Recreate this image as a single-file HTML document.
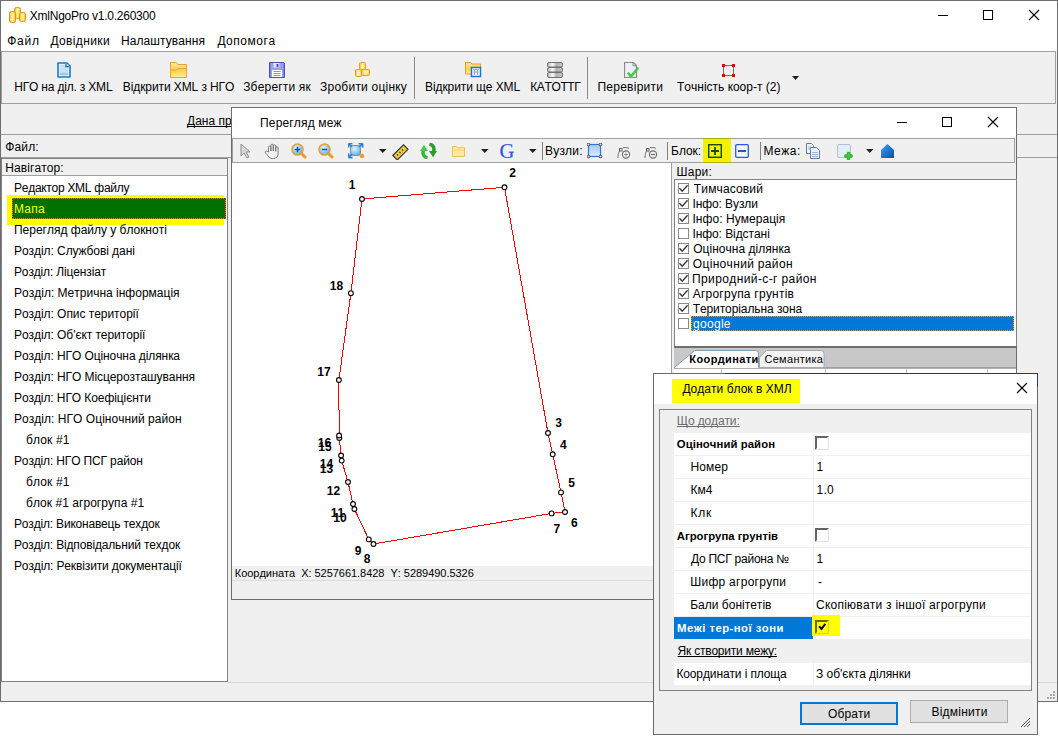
<!DOCTYPE html>
<html><head><meta charset="utf-8">
<style>
*{margin:0;padding:0;box-sizing:border-box}
html,body{width:1058px;height:753px;overflow:hidden;background:#fff;font-family:"Liberation Sans",sans-serif;font-size:12px;color:#000;font-kerning:none}
.a{position:absolute}
.t{position:absolute;white-space:pre;line-height:14px;text-decoration-skip-ink:none}
.s{position:absolute;white-space:pre;line-height:13px;font-size:11px}
.hl{position:absolute;height:1px}
.vl{position:absolute;width:1px}
</style></head><body>
<!-- MAIN WINDOW -->
<div class="a" style="left:0;top:0;width:1058px;height:702px;border:1px solid #6e6e6e;background:#f0f0f0"></div>
<div class="a" style="left:1px;top:1px;width:1056px;height:50px;background:#fff"></div>
<div class="t" style="left:29.8px;top:9px;letter-spacing:-0.245px">XmlNgoPro v1.0.260300</div>
<div class="t" style="left:7.2px;top:34px;letter-spacing:0.800px">Файл</div>
<div class="t" style="left:50.4px;top:34px;letter-spacing:0.389px">Довідники</div>
<div class="t" style="left:120.9px;top:34px;letter-spacing:0.108px">Налаштування</div>
<div class="t" style="left:217.4px;top:34px;letter-spacing:0.543px">Допомога</div>

<!-- toolbar -->
<div class="a" style="left:1px;top:51px;width:1055px;height:53px;border:1px solid #a0a0a0;background:#f0f0f0"></div>
<div class="t" style="left:14.2px;top:80px;letter-spacing:-0.181px">НГО на діл. з XML</div>
<div class="t" style="left:122.8px;top:80px;letter-spacing:-0.095px">Відкрити XML з НГО</div>
<div class="t" style="left:243.2px;top:80px;letter-spacing:0.180px">Зберегти як</div>
<div class="t" style="left:320.1px;top:80px;letter-spacing:0.223px">Зробити оцінку</div>
<div class="t" style="left:425.0px;top:80px;letter-spacing:-0.086px">Відкрити ще XML</div>
<div class="t" style="left:530.2px;top:80px;letter-spacing:-0.367px">КАТОТТГ</div>
<div class="t" style="left:597.5px;top:80px;letter-spacing:0.244px">Перевірити</div>
<div class="t" style="left:677.0px;top:80px">Точність коор-т (2)</div>


<!-- app icon coins -->
<svg class="a" style="left:9px;top:7px" width="17" height="16" viewBox="0 0 17 16">
 <defs><linearGradient id="cg" x1="0" x2="1"><stop offset="0" stop-color="#f8c040"/><stop offset="0.5" stop-color="#fff07a"/><stop offset="1" stop-color="#f8c848"/></linearGradient></defs>
 <rect x="5.5" y="0.5" width="6" height="11" rx="2" fill="url(#cg)" stroke="#e09020"/>
 <rect x="0.5" y="4.5" width="6" height="11" rx="2" fill="url(#cg)" stroke="#e09020"/>
 <rect x="10.5" y="5.5" width="6" height="9" rx="2" fill="url(#cg)" stroke="#e09020"/>
 <path d="M2 7.5h3M2 10h3M2 12.5h3M12 8h3M12 10.5h3M7 3h3M7 5.5h3" stroke="#fff6c0" stroke-width="1"/>
</svg>
<!-- doc -->
<svg class="a" style="left:57px;top:62px" width="14" height="16" viewBox="0 0 14 16">
 <path d="M1 1h9l3 3v11H1z" fill="#fff" stroke="#1a78c2" stroke-width="1.6" stroke-linejoin="round"/>
 <rect x="2.5" y="2.5" width="9" height="8" fill="#c8e0f0"/><rect x="2.5" y="10.5" width="9" height="3" fill="#9ccbe8"/>
 <path d="M9 1.5v3h3" fill="#fff" stroke="#1a78c2" stroke-width="1.4"/>
</svg>
<!-- folder -->
<svg class="a" style="left:170px;top:62px" width="17" height="16" viewBox="0 0 17 16">
 <defs><linearGradient id="fg" x1="0" y1="0" x2="0" y2="1"><stop offset="0" stop-color="#ffe9a0"/><stop offset="0.55" stop-color="#ffd24a"/><stop offset="1" stop-color="#fff0a0"/></linearGradient></defs>
 <path d="M0.5 0.5h6l1.5 2h8.5v13H0.5z" fill="url(#fg)" stroke="#f0a030"/>
 <path d="M1 8h6l1-1.5h8" stroke="#e8a040" fill="none"/>
</svg>
<!-- floppy -->
<svg class="a" style="left:269px;top:62px" width="16" height="16" viewBox="0 0 16 16">
 <path d="M0.5 0.5h14l1 1v14H0.5z" fill="#8088e8" stroke="#4850b0"/>
 <rect x="2" y="1" width="12" height="14" fill="#9aa0f0"/>
 <rect x="4.5" y="1" width="6" height="4.5" fill="#e0e4ff"/><rect x="7.5" y="2" width="2" height="3" fill="#4850b0"/>
 <rect x="3" y="8" width="10" height="7" fill="#fff"/>
 <path d="M4.5 9.5h7M4.5 11.5h7M4.5 13.5h7" stroke="#7a7a90" stroke-width="0.8"/>
</svg>
<!-- coins toolbar -->
<svg class="a" style="left:355px;top:62px" width="16" height="15" viewBox="0 0 16 15">
 <rect x="4.5" y="0.5" width="6" height="7" rx="1" fill="url(#cg)" stroke="#e8a030"/>
 <rect x="0.5" y="7.5" width="6" height="7" rx="1" fill="url(#cg)" stroke="#e8a030"/>
 <rect x="6.5" y="7.5" width="8" height="6" rx="1" fill="url(#cg)" stroke="#e8a030"/>
 <path d="M6 3.5h3M6 5.5h3M2 10.5h3M2 12.5h3M9 10h4" stroke="#fff" stroke-width="1"/>
</svg>
<!-- folder + grid -->
<svg class="a" style="left:465px;top:62px" width="17" height="16" viewBox="0 0 17 16">
 <path d="M0.5 0.5h5l1.5 1.5h8.5v10H0.5z" fill="url(#fg)" stroke="#e89828"/>
 <rect x="6.5" y="5.5" width="9" height="9" fill="#fff" stroke="#1a78c2" stroke-width="1.5"/>
 <path d="M9.5 7v6M12.5 7v6M8 10h6" stroke="#80a8d8"/><path d="M8 7.5h6" stroke="#f0a030"/>
</svg>
<!-- database -->
<svg class="a" style="left:547px;top:62px" width="17" height="16" viewBox="0 0 17 16">
 <defs><linearGradient id="dg" x1="0" x2="1"><stop offset="0" stop-color="#b8b8b8"/><stop offset="0.35" stop-color="#fafafa"/><stop offset="0.6" stop-color="#b0b0b0"/><stop offset="1" stop-color="#c8c8c8"/></linearGradient></defs>
 <rect x="0.5" y="0.5" width="15" height="4.5" rx="1.5" fill="url(#dg)" stroke="#707070"/>
 <rect x="0.5" y="5.5" width="15" height="4.5" rx="1.5" fill="url(#dg)" stroke="#707070"/>
 <rect x="0.5" y="10.5" width="15" height="5" rx="1.5" fill="url(#dg)" stroke="#707070"/>
</svg>
<!-- doc check -->
<svg class="a" style="left:624px;top:62px" width="15" height="17" viewBox="0 0 15 17">
 <path d="M0.5 0.5h9l3 3v12H0.5z" fill="#eceef8" stroke="#8a8a8a" stroke-width="1.2"/>
 <path d="M9 0.8v3h3" fill="none" stroke="#8a8a8a"/>
 <path d="M4.5 11.5l2.5 3 6.5-8" fill="none" stroke="#44cc44" stroke-width="2.6" stroke-linecap="round"/>
</svg>
<!-- red square -->
<svg class="a" style="left:722px;top:64px" width="14" height="14" viewBox="0 0 14 14">
 <rect x="1.5" y="1.5" width="10" height="10" fill="none" stroke="#707070"/>
 <rect x="0" y="0" width="3" height="3" fill="#e00000"/><rect x="10" y="0" width="3" height="3" fill="#e00000"/>
 <rect x="0" y="10" width="3" height="3" fill="#e00000"/><rect x="10" y="10" width="3" height="3" fill="#e00000"/>
</svg>
<svg class="a" style="left:792px;top:76px" width="8" height="5" viewBox="0 0 8 5"><path d="M0 0h7l-3.5 4z" fill="#202020"/></svg>
<div class="vl" style="left:414px;top:57px;height:42px;background:#8a8a8a"></div>
<div class="vl" style="left:587px;top:57px;height:42px;background:#8a8a8a"></div>
<!-- title buttons -->
<div class="hl" style="left:938px;top:15px;width:10px;background:#000"></div>
<div class="a" style="left:983px;top:10px;width:10px;height:10px;border:1px solid #000"></div>
<svg class="a" style="left:1028px;top:9px" width="12" height="12" viewBox="0 0 12 12"><path d="M1 1l10 10M11 1L1 11" stroke="#000" stroke-width="1.1"/></svg>

<!-- row 2 -->
<div class="hl" style="left:1px;top:134px;width:1056px;background:#a0a0a0"></div>
<div class="t" style="left:187px;top:114px;text-decoration:underline">Дана програма</div>
<div class="hl" style="left:1px;top:157px;width:1056px;background:#a0a0a0"></div>
<div class="t" style="left:5.2px;top:140px;letter-spacing:0.150px">Файл:</div>

<!-- navigator -->
<div class="a" style="left:1px;top:158px;width:227px;height:524px;border:1px solid #828282;background:#fff"></div>
<div class="a" style="left:2px;top:159px;width:225px;height:17px;background:#f0f0f0;border-bottom:1px solid #a0a0a0"></div>
<div class="t" style="left:5.2px;top:161px;letter-spacing:0.099px">Навігатор:</div>
<div class="t" style="left:14px;top:181px;letter-spacing:-0.267px">Редактор XML файлу</div>
<div class="a" style="left:7px;top:195px;width:217px;height:30px;background:#ffff00"></div>
<div class="a" style="left:12px;top:198px;width:214px;height:21px;background:#007000;border:1px dotted #e08020"></div>
<div class="t" style="left:14px;top:202px;color:#ffff00;letter-spacing:0.3px">Мапа</div>
<div class="t" style="left:14px;top:223px;letter-spacing:-0.01px">Перегляд файлу у блокноті</div>
<div class="t" style="left:14px;top:244px;letter-spacing:-0.06px">Розділ: Службові дані</div>
<div class="t" style="left:14px;top:265px;letter-spacing:-0.147px">Розділ: Ліцензіат</div>
<div class="t" style="left:14px;top:286px;letter-spacing:0.007px">Розділ: Метрична інформація</div>
<div class="t" style="left:14px;top:307px;letter-spacing:-0.050px">Розділ: Опис території</div>
<div class="t" style="left:14px;top:328px;letter-spacing:-0.054px">Розділ: Об'єкт території</div>
<div class="t" style="left:14px;top:349px;letter-spacing:-0.079px">Розділ: НГО Оціночна ділянка</div>
<div class="t" style="left:14px;top:370px;letter-spacing:-0.072px">Розділ: НГО Місцерозташування</div>
<div class="t" style="left:14px;top:391px;letter-spacing:-0.083px">Розділ: НГО Коефіцієнти</div>
<div class="t" style="left:14px;top:412px;letter-spacing:0.041px">Розділ: НГО Оціночний район</div>
<div class="t" style="left:26px;top:433px;letter-spacing:0.157px">блок #1</div>
<div class="t" style="left:14px;top:454px;letter-spacing:-0.148px">Розділ: НГО ПСГ район</div>
<div class="t" style="left:26px;top:475px;letter-spacing:0.157px">блок #1</div>
<div class="t" style="left:26px;top:496px;letter-spacing:0.055px">блок #1 агрогрупа #1</div>
<div class="t" style="left:14px;top:517px;letter-spacing:-0.180px">Розділ: Виконавець техдок</div>
<div class="t" style="left:14px;top:538px;letter-spacing:-0.166px">Розділ: Відповідальний техдок</div>
<div class="t" style="left:14px;top:559px;letter-spacing:-0.133px">Розділ: Реквізити документації</div>

<!-- status bar -->
<div class="hl" style="left:228px;top:682px;width:829px;background:#d7d7d7"></div>
<svg class="a" style="left:1047px;top:690px" width="9" height="10" viewBox="0 0 9 10"><g fill="#a8a8a8"><rect x="6" y="1" width="2" height="2"/><rect x="3" y="4" width="2" height="2"/><rect x="6" y="4" width="2" height="2"/><rect x="0" y="7" width="2" height="2"/><rect x="3" y="7" width="2" height="2"/><rect x="6" y="7" width="2" height="2"/></g></svg>


<!-- INNER WINDOW -->
<div class="a" style="left:231px;top:107px;width:786px;height:493px;border:1px solid #6e6e6e;background:#f0f0f0"></div>
<div class="a" style="left:232px;top:108px;width:784px;height:30px;background:#fff"></div>
<div class="t" style="left:260.0px;top:116px;letter-spacing:0.164px">Перегляд меж</div>
<div class="hl" style="left:897px;top:122px;width:10px;background:#000"></div>
<div class="a" style="left:942px;top:117px;width:10px;height:10px;border:1px solid #000"></div>
<svg class="a" style="left:987px;top:116px" width="12" height="12" viewBox="0 0 12 12"><path d="M1 1l10 10M11 1L1 11" stroke="#000" stroke-width="1.1"/></svg>
<!-- inner toolbar -->
<div class="a" style="left:232px;top:138px;width:783px;height:25px;border:1px solid #a0a0a0;background:#f0f0f0"></div>

<!-- arrow cursor -->
<svg class="a" style="left:240px;top:143px" width="12" height="16" viewBox="0 0 12 16">
 <path d="M1 1v12l3-3 3 5 2-1-3-5h4z" fill="#d8d8d8" stroke="#909090" stroke-linejoin="round"/>
</svg>
<!-- hand -->
<svg class="a" style="left:264px;top:143px" width="16" height="16" viewBox="0 0 16 16">
 <path d="M4.5 9V4.2a1.2 1.2 0 0 1 2.4 0V8V2.4a1.2 1.2 0 0 1 2.4 0V8V2.9a1.2 1.2 0 0 1 2.4 0V8.3V5a1.2 1.2 0 0 1 2.4 0v6c0 2.5-2 4.5-4.5 4.5H8.2c-2 0-3-1-4-2.5L1.2 9.6a1.1 1.1 0 0 1 1.8-1.2z" fill="#f2f2f2" stroke="#6e6e6e" stroke-width="0.9" stroke-linejoin="round"/>
</svg>
<!-- zoom + -->
<svg class="a" style="left:291px;top:143px" width="16" height="16" viewBox="0 0 16 16">
 <defs><radialGradient id="zg" cx="0.4" cy="0.35" r="0.7"><stop offset="0" stop-color="#e8f6ff"/><stop offset="1" stop-color="#58b0e8"/></radialGradient></defs>
 <path d="M10.5 10.5L14 14" stroke="#f09a20" stroke-width="3" stroke-linecap="round"/>
 <circle cx="6.5" cy="6.5" r="5.5" fill="url(#zg)" stroke="#e8a030" stroke-width="1.6"/>
 <path d="M3.8 6.5h5.4M6.5 3.8v5.4" stroke="#1050a0" stroke-width="1.5"/>
</svg>
<!-- zoom - -->
<svg class="a" style="left:318px;top:143px" width="16" height="16" viewBox="0 0 16 16">
 <path d="M10.5 10.5L14 14" stroke="#f09a20" stroke-width="3" stroke-linecap="round"/>
 <circle cx="6.5" cy="6.5" r="5.5" fill="url(#zg)" stroke="#e8a030" stroke-width="1.6"/>
 <path d="M3.8 6.5h5.4" stroke="#1050a0" stroke-width="1.5"/>
</svg>
<!-- zoom extent -->
<svg class="a" style="left:348px;top:143px" width="17" height="16" viewBox="0 0 17 16">
 <rect x="2.5" y="2.5" width="10" height="10" rx="2" fill="url(#zg)" stroke="#909090"/>
 <path d="M0.5 0.5h4M0.5 0.5v4M14.5 0.5h-4M14.5 0.5v4M0.5 14.5h4M0.5 14.5v-4" stroke="#2a80d0" stroke-width="2"/>
 <path d="M1 1l3 3M14 1l-3 3M1 14l3-3" stroke="#2a80d0" stroke-width="1.5"/>
 <circle cx="14" cy="13" r="2.3" fill="#f0a020"/>
</svg>
<svg class="a" style="left:379px;top:149px" width="8" height="5" viewBox="0 0 8 5"><path d="M0 0h7.5l-3.75 4z" fill="#202020"/></svg>
<!-- ruler -->
<svg class="a" style="left:392px;top:144px" width="17" height="16" viewBox="0 0 17 16">
 <path d="M0.8 11.5L11.5 0.8l4.5 4.5L5.3 16z" fill="#f0c840" stroke="#303030" stroke-width="1.1"/>
 <path d="M5 10.5l1 1M7.5 8l1 1M10 5.5l1 1" stroke="#303030" stroke-width="1.2"/>
</svg>
<!-- refresh -->
<svg class="a" style="left:420px;top:143px" width="17" height="16" viewBox="0 0 17 16">
 <path d="M7.5 15C3 14 2.2 10 3.8 6.5" fill="none" stroke="#36b636" stroke-width="3.4"/>
 <path d="M0 8L4 1.8 8 8z" fill="#48c848"/>
 <path d="M9.5 1C14 2 14.8 6 13.2 9.5" fill="none" stroke="#2a9e2a" stroke-width="3.4"/>
 <path d="M9 8l4 6.2 4-6.2z" fill="#2a9e2a"/>
</svg>
<!-- folder light -->
<svg class="a" style="left:452px;top:146px" width="13" height="11" viewBox="0 0 13 11">
 <path d="M0.5 0.5h4l1 1.2h7v8.8H0.5z" fill="#ffeaa0" stroke="#f0c050"/>
 <path d="M1 4h11" stroke="#f5d070"/>
</svg>
<svg class="a" style="left:481px;top:149px" width="8" height="5" viewBox="0 0 8 5"><path d="M0 0h7.5l-3.75 4z" fill="#202020"/></svg>
<div class="a" style="left:499.5px;top:140px;font-family:'Liberation Serif',serif;font-size:20.5px;line-height:22px;color:#2a56e8;-webkit-text-stroke:0.15px #2a56e8">G</div>
<svg class="a" style="left:529px;top:149px" width="8" height="5" viewBox="0 0 8 5"><path d="M0 0h7.5l-3.75 4z" fill="#202020"/></svg>
<div class="vl" style="left:542px;top:142px;height:18px;background:#808080"></div>
<div class="t" style="left:545.0px;top:144px;letter-spacing:0.200px">Вузли:</div>
<!-- nodes rect -->
<svg class="a" style="left:587px;top:143px" width="16" height="16" viewBox="0 0 16 16">
 <defs><linearGradient id="ng" x1="0" y1="0" x2="0" y2="1"><stop offset="0" stop-color="#a8c8ec"/><stop offset="1" stop-color="#d8ecff"/></linearGradient></defs>
 <rect x="1.5" y="1.5" width="12" height="12" fill="url(#ng)" stroke="#2a78d0" stroke-width="1.2"/>
 <circle cx="1.5" cy="1.5" r="1.4" fill="#d0d0d0" stroke="#505050"/><circle cx="13.5" cy="1.5" r="1.4" fill="#d0d0d0" stroke="#505050"/>
 <circle cx="1.5" cy="13.5" r="1.4" fill="#d0d0d0" stroke="#505050"/><circle cx="13.5" cy="13.5" r="1.4" fill="#d0d0d0" stroke="#505050"/>
</svg>
<!-- add node -->
<svg class="a" style="left:617px;top:146px" width="14" height="13" viewBox="0 0 14 13">
 <path d="M1 12c0-5 1.5-8 4-9" fill="none" stroke="#707070"/><path d="M6 1.5c3 0 5 0.3 6 1" fill="none" stroke="#707070"/>
 <rect x="2.5" y="2.5" width="2.5" height="2.5" fill="#fff" stroke="#606060"/>
 <circle cx="9" cy="8.5" r="3.6" fill="#f4f4f4" stroke="#707070" stroke-width="1.2"/>
 <path d="M7 8.5h4M9 6.5v4" stroke="#909090"/>
</svg>
<svg class="a" style="left:644px;top:146px" width="14" height="13" viewBox="0 0 14 13">
 <path d="M1 12c0-5 1.5-8 4-9" fill="none" stroke="#707070"/><path d="M6 1.5c3 0 5 0.3 6 1" fill="none" stroke="#707070"/>
 <rect x="2.5" y="2.5" width="2.5" height="2.5" fill="#fff" stroke="#606060"/>
 <circle cx="9" cy="8.5" r="3.6" fill="#f4f4f4" stroke="#707070" stroke-width="1.2"/>
 <path d="M7 8.5h4" stroke="#707070" stroke-width="1.3"/>
</svg>
<div class="vl" style="left:667px;top:142px;height:18px;background:#808080"></div>
<div class="t" style="left:671px;top:144px">Блок:</div>
<div class="a" style="left:703px;top:138px;width:28px;height:25px;background:#f2f200"></div>
<div class="hl" style="left:703px;top:138px;width:28px;background:#b0b000"></div>
<div class="hl" style="left:703px;top:162px;width:28px;background:#b0b000"></div>
<svg class="a" style="left:708px;top:144px" width="14" height="14" viewBox="0 0 14 14">
 <rect x="0.7" y="0.7" width="12.6" height="12.6" fill="none" stroke="#1a4a10" stroke-width="1.4"/>
 <path d="M3 7h8M7 3v8" stroke="#1a4a10" stroke-width="1.8"/>
</svg>
<svg class="a" style="left:735px;top:144px" width="14" height="14" viewBox="0 0 14 14">
 <rect x="0.7" y="0.7" width="12.6" height="12.6" rx="1" fill="#f4f4f8" stroke="#2a5ae0" stroke-width="1.3"/>
 <path d="M3 7h8" stroke="#1a3ad0" stroke-width="1.8"/>
</svg>
<div class="vl" style="left:760px;top:142px;height:18px;background:#808080"></div>
<div class="t" style="left:763.5px;top:144px;letter-spacing:0.525px">Межа:</div>
<!-- copy -->
<svg class="a" style="left:806px;top:143px" width="15" height="16" viewBox="0 0 15 16">
 <path d="M0.5 0.5h5l2 2v8H0.5z" fill="#eef2fa" stroke="#6a7a90"/>
 <path d="M4.5 4.5h6l3 3v8h-9z" fill="#eef2fa" stroke="#6a7a90"/>
 <path d="M6 9.5h6M6 11.5h6M6 13.5h6M2 4h3M2 6h3" stroke="#90b8e8"/>
</svg>
<!-- add -->
<svg class="a" style="left:837px;top:144px" width="17" height="16" viewBox="0 0 17 16">
 <rect x="0.5" y="0.5" width="13" height="13" rx="1.5" fill="#e4ecf6" stroke="#b0c0d8"/>
 <path d="M10.3 8.3h2.4v2.5h2.5v2.4h-2.5v2.5h-2.4v-2.5H7.8v-2.4h2.5z" fill="#3ccc3c" stroke="#1f9f1f" stroke-width="0.8" stroke-linejoin="round"/>
</svg>
<svg class="a" style="left:866px;top:149px" width="8" height="5" viewBox="0 0 8 5"><path d="M0 0h7.5l-3.75 4z" fill="#202020"/></svg>
<!-- home -->
<svg class="a" style="left:881px;top:144px" width="14" height="14" viewBox="0 0 14 14">
 <defs><linearGradient id="hg" x1="0" y1="0" x2="1" y2="1"><stop offset="0" stop-color="#40a0f0"/><stop offset="1" stop-color="#0050b0"/></linearGradient></defs>
 <path d="M0 6L6.5 0 13 6v8H0z" fill="url(#hg)"/>
</svg>

<!-- map -->
<div class="a" style="left:232px;top:163px;width:440px;height:403px;background:#fff"></div>
<div class="vl" style="left:671px;top:163px;height:403px;background:#a0a0a0"></div>
<svg class="a" style="left:232px;top:163px" width="439" height="403" viewBox="0 0 439 403">
<path d="M130.0,36.0 L272.5,24.3 L316.0,270.0 L320.7,291.3 L329.0,329.4 L333.0,349.0 L319.6,350.4 L141.5,381.0 L136.8,376.4 L122.4,346.0 L121.0,341.0 L116.0,319.0 L109.7,297.6 L109.1,292.5 L107.3,275.0 L107.1,272.5 L106.9,217.0 L118.9,130.2 Z" fill="none" stroke="#ff0000" stroke-width="1" shape-rendering="crispEdges"/>
<circle cx="130.0" cy="36.0" r="2.4" fill="#fff" stroke="#000" stroke-width="1.1"/>
<circle cx="272.5" cy="24.3" r="2.4" fill="#fff" stroke="#000" stroke-width="1.1"/>
<circle cx="316.0" cy="270.0" r="2.4" fill="#fff" stroke="#000" stroke-width="1.1"/>
<circle cx="320.7" cy="291.3" r="2.4" fill="#fff" stroke="#000" stroke-width="1.1"/>
<circle cx="329.0" cy="329.4" r="2.4" fill="#fff" stroke="#000" stroke-width="1.1"/>
<circle cx="333.0" cy="349.0" r="2.4" fill="#fff" stroke="#000" stroke-width="1.1"/>
<circle cx="319.6" cy="350.4" r="2.4" fill="#fff" stroke="#000" stroke-width="1.1"/>
<circle cx="141.5" cy="381.0" r="2.4" fill="#fff" stroke="#000" stroke-width="1.1"/>
<circle cx="136.8" cy="376.4" r="2.4" fill="#fff" stroke="#000" stroke-width="1.1"/>
<circle cx="122.4" cy="346.0" r="2.4" fill="#fff" stroke="#000" stroke-width="1.1"/>
<circle cx="121.0" cy="341.0" r="2.4" fill="#fff" stroke="#000" stroke-width="1.1"/>
<circle cx="116.0" cy="319.0" r="2.4" fill="#fff" stroke="#000" stroke-width="1.1"/>
<circle cx="109.7" cy="297.6" r="2.4" fill="#fff" stroke="#000" stroke-width="1.1"/>
<circle cx="109.1" cy="292.5" r="2.4" fill="#fff" stroke="#000" stroke-width="1.1"/>
<circle cx="107.3" cy="275.0" r="2.4" fill="#fff" stroke="#000" stroke-width="1.1"/>
<circle cx="107.1" cy="272.5" r="2.4" fill="#fff" stroke="#000" stroke-width="1.1"/>
<circle cx="106.9" cy="217.0" r="2.4" fill="#fff" stroke="#000" stroke-width="1.1"/>
<circle cx="118.9" cy="130.2" r="2.4" fill="#fff" stroke="#000" stroke-width="1.1"/>
<text x="120.2" y="26.0" text-anchor="middle" font-family="Liberation Sans" font-weight="bold" font-size="12">1</text>
<text x="280.5" y="14.3" text-anchor="middle" font-family="Liberation Sans" font-weight="bold" font-size="12">2</text>
<text x="326.7" y="264.2" text-anchor="middle" font-family="Liberation Sans" font-weight="bold" font-size="12">3</text>
<text x="331.3" y="285.5" text-anchor="middle" font-family="Liberation Sans" font-weight="bold" font-size="12">4</text>
<text x="339.5" y="324.2" text-anchor="middle" font-family="Liberation Sans" font-weight="bold" font-size="12">5</text>
<text x="342.3" y="364.2" text-anchor="middle" font-family="Liberation Sans" font-weight="bold" font-size="12">6</text>
<text x="324.8" y="369.8" text-anchor="middle" font-family="Liberation Sans" font-weight="bold" font-size="12">7</text>
<text x="135.0" y="400.0" text-anchor="middle" font-family="Liberation Sans" font-weight="bold" font-size="12">8</text>
<text x="126.0" y="391.7" text-anchor="middle" font-family="Liberation Sans" font-weight="bold" font-size="12">9</text>
<text x="108.0" y="359.0" text-anchor="middle" font-family="Liberation Sans" font-weight="bold" font-size="12">10</text>
<text x="105.5" y="354.0" text-anchor="middle" font-family="Liberation Sans" font-weight="bold" font-size="12">11</text>
<text x="101.5" y="331.7" text-anchor="middle" font-family="Liberation Sans" font-weight="bold" font-size="12">12</text>
<text x="94.5" y="310.0" text-anchor="middle" font-family="Liberation Sans" font-weight="bold" font-size="12">13</text>
<text x="94.5" y="305.0" text-anchor="middle" font-family="Liberation Sans" font-weight="bold" font-size="12">14</text>
<text x="93.0" y="288.0" text-anchor="middle" font-family="Liberation Sans" font-weight="bold" font-size="12">15</text>
<text x="92.5" y="284.0" text-anchor="middle" font-family="Liberation Sans" font-weight="bold" font-size="12">16</text>
<text x="92.0" y="213.0" text-anchor="middle" font-family="Liberation Sans" font-weight="bold" font-size="12">17</text>
<text x="104.4" y="126.5" text-anchor="middle" font-family="Liberation Sans" font-weight="bold" font-size="12">18</text>
</svg>
<!-- status -->
<div class="s" style="left:234.8px;top:567px;letter-spacing:-0.035px">Координата  X: 5257661.8428  Y: 5289490.5326</div>
<div class="hl" style="left:232px;top:580px;width:784px;background:#dcdcdc"></div>
<!-- right panel -->
<div class="t" style="left:676.6px;top:165px;letter-spacing:0.200px">Шари:</div>
<div class="a" style="left:674px;top:179px;width:343px;height:169px;border:1px solid #828282;background:#fff"></div>
<div class="t" style="left:693.8px;top:182px;letter-spacing:0.156px">Тимчасовий</div>
<div class="a" style="left:678px;top:183px;width:11px;height:11px;border:1px solid #8a8a8a;background:#fff"></div>
<svg class="a" style="left:678px;top:183px" width="11" height="11" viewBox="0 0 11 11"><path d="M1.5 5.3L4.2 8.2 9.6 2.2" fill="none" stroke="#3a3a3a" stroke-width="1.4"/></svg>
<div class="t" style="left:692.4px;top:197px;letter-spacing:-0.080px">Інфо: Вузли</div>
<div class="a" style="left:678px;top:198px;width:11px;height:11px;border:1px solid #8a8a8a;background:#fff"></div>
<svg class="a" style="left:678px;top:198px" width="11" height="11" viewBox="0 0 11 11"><path d="M1.5 5.3L4.2 8.2 9.6 2.2" fill="none" stroke="#3a3a3a" stroke-width="1.4"/></svg>
<div class="t" style="left:692.4px;top:212px;letter-spacing:0.057px">Інфо: Нумерація</div>
<div class="a" style="left:678px;top:213px;width:11px;height:11px;border:1px solid #8a8a8a;background:#fff"></div>
<svg class="a" style="left:678px;top:213px" width="11" height="11" viewBox="0 0 11 11"><path d="M1.5 5.3L4.2 8.2 9.6 2.2" fill="none" stroke="#3a3a3a" stroke-width="1.4"/></svg>
<div class="t" style="left:692.4px;top:227px;letter-spacing:-0.07px">Інфо: Відстані</div>
<div class="a" style="left:678px;top:228px;width:11px;height:11px;border:1px solid #8a8a8a;background:#fff"></div>
<div class="t" style="left:693.2px;top:242px;letter-spacing:0.033px">Оціночна ділянка</div>
<div class="a" style="left:678px;top:243px;width:11px;height:11px;border:1px solid #8a8a8a;background:#fff"></div>
<svg class="a" style="left:678px;top:243px" width="11" height="11" viewBox="0 0 11 11"><path d="M1.5 5.3L4.2 8.2 9.6 2.2" fill="none" stroke="#3a3a3a" stroke-width="1.4"/></svg>
<div class="t" style="left:692.8px;top:257px;letter-spacing:0.328px">Оціночний район</div>
<div class="a" style="left:678px;top:258px;width:11px;height:11px;border:1px solid #8a8a8a;background:#fff"></div>
<svg class="a" style="left:678px;top:258px" width="11" height="11" viewBox="0 0 11 11"><path d="M1.5 5.3L4.2 8.2 9.6 2.2" fill="none" stroke="#3a3a3a" stroke-width="1.4"/></svg>
<div class="t" style="left:692.0px;top:272px;letter-spacing:0.389px">Природний-с-г район</div>
<div class="a" style="left:678px;top:273px;width:11px;height:11px;border:1px solid #8a8a8a;background:#fff"></div>
<svg class="a" style="left:678px;top:273px" width="11" height="11" viewBox="0 0 11 11"><path d="M1.5 5.3L4.2 8.2 9.6 2.2" fill="none" stroke="#3a3a3a" stroke-width="1.4"/></svg>
<div class="t" style="left:692.7px;top:287px;letter-spacing:0.238px">Агрогрупа грунтів</div>
<div class="a" style="left:678px;top:288px;width:11px;height:11px;border:1px solid #8a8a8a;background:#fff"></div>
<svg class="a" style="left:678px;top:288px" width="11" height="11" viewBox="0 0 11 11"><path d="M1.5 5.3L4.2 8.2 9.6 2.2" fill="none" stroke="#3a3a3a" stroke-width="1.4"/></svg>
<div class="t" style="left:692.7px;top:302px;letter-spacing:-0.089px">Територіальна зона</div>
<div class="a" style="left:678px;top:303px;width:11px;height:11px;border:1px solid #8a8a8a;background:#fff"></div>
<svg class="a" style="left:678px;top:303px" width="11" height="11" viewBox="0 0 11 11"><path d="M1.5 5.3L4.2 8.2 9.6 2.2" fill="none" stroke="#3a3a3a" stroke-width="1.4"/></svg>
<div class="a" style="left:691px;top:316px;width:323px;height:15px;background:#0078d7;border:1px dotted #e0a040"></div>
<div class="t" style="left:693px;top:317px;color:#fff;letter-spacing:0.3px">google</div>
<div class="a" style="left:678px;top:318px;width:11px;height:11px;border:1px solid #8a8a8a;background:#fff"></div>
<div class="a" style="left:674px;top:347px;width:342px;height:21px;background:#c0c0c0"></div>

<div class="a" style="left:674px;top:346px;width:343px;height:2px;background:#6e6e6e"></div>
<svg class="a" style="left:674px;top:348px" width="343" height="26" viewBox="0 0 343 26">
 <rect x="0" y="0" width="342" height="20" fill="#c8c8c8"/>
 <rect x="0" y="20" width="342" height="6" fill="#fff"/>
 <path d="M0 19.5H342" stroke="#8aa4c4"/>
 <path d="M85.5 19.5V9.5L92.5 2.5H147q3 0 3 3V19.5z" fill="#f4f4f4" stroke="#a8a8a8"/>
 <path d="M0.5 19.5L20.5 2.5H81.5q3 0 3 3V19.5" fill="#fff" stroke="#7f9db9"/>
 <path d="M1 19.5H84" stroke="#fff"/>
 <path d="M0 20.5H342" stroke="#b0b0b0"/>
 <path d="M47.5 21v5M151.5 21v5M232.5 21v5M313.5 21v5" stroke="#c8c8c8"/>
</svg>
<div class="t" style="left:689.3px;top:352px;font-weight:bold;font-size:11px;letter-spacing:0.394px">Координати</div>
<div class="t" style="left:764.4px;top:352px;font-size:11px;letter-spacing:0.311px">Семантика</div>


<!-- DIALOG -->
<div class="a" style="left:653px;top:373px;width:385px;height:362px;border:1px solid #6a6a6a;background:#f0f0f0"></div>
<div class="a" style="left:654px;top:374px;width:383px;height:30px;background:#fff"></div>
<div class="hl" style="left:725px;top:373px;width:313px;background:#1b3f66"></div>
<div class="vl" style="left:1037px;top:373px;height:14px;background:#1b3f66"></div>
<div class="a" style="left:672px;top:379px;width:128px;height:24px;background:#ffff00"></div>
<div class="t" style="left:682.4px;top:382px;letter-spacing:0.039px">Додати блок в ХМЛ</div>
<svg class="a" style="left:1016px;top:382px" width="12" height="12" viewBox="0 0 12 12"><path d="M1 1l10 10M11 1L1 11" stroke="#000" stroke-width="1.1"/></svg>
<div class="a" style="left:659px;top:409px;width:373px;height:282px;border:1px solid #828282;background:#f0f0f0"></div>
<div class="t" style="left:676.8px;top:414px;color:#6d6d6d;text-decoration:underline;letter-spacing:-0.133px">Що додати:</div>
<div class="a" style="left:674px;top:433px;width:357px;height:22px;background:#fff"></div>
<div class="hl" style="left:674px;top:455px;width:357px;background:#f0f0f0"></div>
<div class="vl" style="left:813px;top:433px;height:23px;background:#f0f0f0"></div>
<div class="t" style="left:676.8px;top:437px;font-weight:bold;font-size:11.3px;letter-spacing:0.093px">Оціночний район</div>
<svg class="a" style="left:815px;top:436px" width="14" height="14" viewBox="0 0 14 14"><rect x="0" y="0" width="14" height="14" fill="#fff"/><path d="M0 0H14L12 2H2V12L0 14z" fill="#646464"/><path d="M13.5 1V13.5H1" fill="none" stroke="#e3e3e3"/></svg>
<div class="a" style="left:674px;top:456px;width:357px;height:22px;background:#fff"></div>
<div class="hl" style="left:674px;top:478px;width:357px;background:#f0f0f0"></div>
<div class="vl" style="left:813px;top:456px;height:23px;background:#f0f0f0"></div>
<div class="t" style="left:690.6px;top:460px;letter-spacing:0.075px">Номер</div>
<div class="t" style="left:816.6px;top:460px;letter-spacing:0.300px">1</div>
<div class="a" style="left:674px;top:479px;width:357px;height:22px;background:#fff"></div>
<div class="hl" style="left:674px;top:501px;width:357px;background:#f0f0f0"></div>
<div class="vl" style="left:813px;top:479px;height:23px;background:#f0f0f0"></div>
<div class="t" style="left:690.6px;top:483px;letter-spacing:-0.100px">Км4</div>
<div class="t" style="left:816.6px;top:483px;letter-spacing:0.150px">1.0</div>
<div class="a" style="left:674px;top:502px;width:357px;height:22px;background:#fff"></div>
<div class="hl" style="left:674px;top:524px;width:357px;background:#f0f0f0"></div>
<div class="vl" style="left:813px;top:502px;height:23px;background:#f0f0f0"></div>
<div class="t" style="left:690.6px;top:506px;letter-spacing:0.7px">Клк</div>
<div class="a" style="left:674px;top:525px;width:357px;height:22px;background:#fff"></div>
<div class="hl" style="left:674px;top:547px;width:357px;background:#f0f0f0"></div>
<div class="vl" style="left:813px;top:525px;height:23px;background:#f0f0f0"></div>
<div class="t" style="left:676.8px;top:529px;font-weight:bold;font-size:11.3px;letter-spacing:0.006px">Агрогрупа грунтів</div>
<svg class="a" style="left:815px;top:528px" width="14" height="14" viewBox="0 0 14 14"><rect x="0" y="0" width="14" height="14" fill="#fff"/><path d="M0 0H14L12 2H2V12L0 14z" fill="#646464"/><path d="M13.5 1V13.5H1" fill="none" stroke="#e3e3e3"/></svg>
<div class="a" style="left:674px;top:548px;width:357px;height:22px;background:#fff"></div>
<div class="hl" style="left:674px;top:570px;width:357px;background:#f0f0f0"></div>
<div class="vl" style="left:813px;top:548px;height:23px;background:#f0f0f0"></div>
<div class="t" style="left:691.0px;top:552px;letter-spacing:-0.243px">До ПСГ района №</div>
<div class="t" style="left:816.6px;top:552px;letter-spacing:0.300px">1</div>
<div class="a" style="left:674px;top:571px;width:357px;height:22px;background:#fff"></div>
<div class="hl" style="left:674px;top:593px;width:357px;background:#f0f0f0"></div>
<div class="vl" style="left:813px;top:571px;height:23px;background:#f0f0f0"></div>
<div class="t" style="left:690.2px;top:575px;letter-spacing:0.270px">Шифр агрогрупи</div>
<div class="t" style="left:818px;top:575px">-</div>
<div class="a" style="left:674px;top:594px;width:357px;height:22px;background:#fff"></div>
<div class="hl" style="left:674px;top:616px;width:357px;background:#f0f0f0"></div>
<div class="vl" style="left:813px;top:594px;height:23px;background:#f0f0f0"></div>
<div class="t" style="left:690.2px;top:598px;letter-spacing:0.008px">Бали бонітетів</div>
<div class="t" style="left:816.1px;top:598px;letter-spacing:0.241px">Скопіювати з іншої агрогрупи</div>
<div class="a" style="left:674px;top:617px;width:357px;height:22px;background:#fff"></div>
<div class="hl" style="left:674px;top:639px;width:357px;background:#f0f0f0"></div>
<div class="vl" style="left:813px;top:617px;height:23px;background:#f0f0f0"></div>
<div class="a" style="left:674px;top:617px;width:139px;height:22px;background:#0078d7"></div>
<div class="t" style="left:677px;top:621px;color:#fff;font-weight:bold;font-size:11.3px;letter-spacing:0.48px">Межі тер-ної зони</div>
<div class="a" style="left:812px;top:615px;width:28px;height:21px;background:#ffff00"></div>
<svg class="a" style="left:815px;top:620px" width="14" height="14" viewBox="0 0 14 14"><rect x="0" y="0" width="14" height="14" fill="#ffff00"/><path d="M0 0H14L12 2H2V12L0 14z" fill="#6a6a00"/><path d="M13.5 1V13.5H1" fill="none" stroke="#d8d800"/><path d="M4.2 6.3L6.5 9 10.3 3.8" fill="none" stroke="#000" stroke-width="2"/></svg>
<div class="t" style="left:677.6px;top:644px;color:#000;text-decoration:underline;letter-spacing:-0.219px">Як створити межу:</div>
<div class="a" style="left:674px;top:663px;width:357px;height:22px;background:#fff"></div>
<div class="hl" style="left:674px;top:685px;width:357px;background:#f0f0f0"></div>
<div class="vl" style="left:813px;top:663px;height:23px;background:#f0f0f0"></div>
<div class="t" style="left:676.4px;top:667px;letter-spacing:-0.118px">Координати і площа</div>
<div class="t" style="left:816.1px;top:667px;letter-spacing:-0.031px">З об'єкта ділянки</div>
<div class="a" style="left:800px;top:702px;width:98px;height:23px;background:#e1e1e1;border:2px solid #0078d7"></div>
<div class="t" style="left:800.2px;top:707px;width:98px;text-align:center;letter-spacing:0.100px">Обрати</div>
<div class="a" style="left:910px;top:700px;width:98px;height:23px;background:#e1e1e1;border:1px solid #adadad"></div>
<div class="t" style="left:910.6px;top:705px;width:98px;text-align:center;letter-spacing:0.250px">Відмінити</div>
<svg class="a" style="left:1019px;top:716px" width="12" height="12" viewBox="0 0 12 12"><path d="M11 2L2 11M11 5L5 11M11 8L8 11" stroke="#555" stroke-width="1"/></svg>
</body></html>
